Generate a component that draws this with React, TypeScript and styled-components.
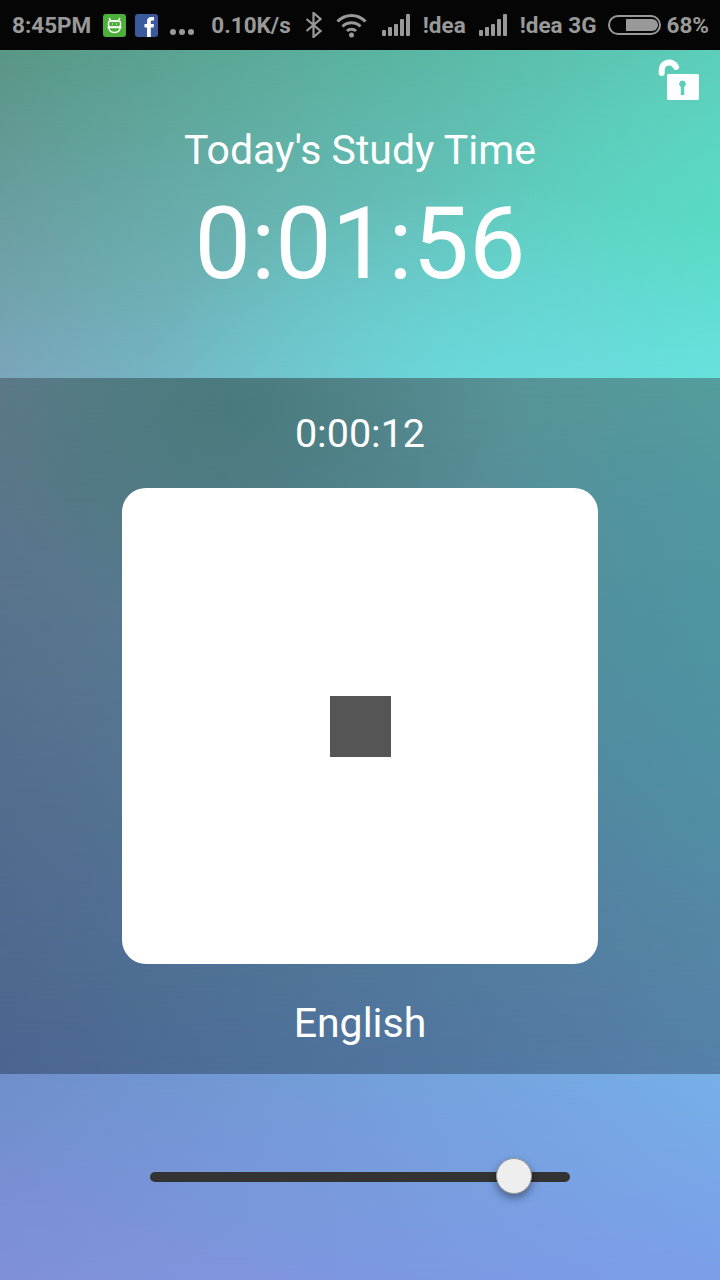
import { FC } from 'react'
import styled, { createGlobalStyle } from 'styled-components'

const GlobalStl = createGlobalStyle`
  html, body {
    margin: 0;
    padding: 0;
    width: 720px;
    height: 1280px;
    overflow: hidden;
    font-family: 'Roboto', 'Liberation Sans', sans-serif;
  }
`

const ScreenStl = styled.div`
  width: 720px;
  height: 1280px;
  display: flex;
  flex-direction: column;
`

const StatusBarStl = styled.div`
  flex: 0 0 50px;
  display: flex;
  align-items: center;
  padding-left: 12px;
  background: #050505;
  color: #999;
  font-size: 22.5px;
  font-weight: 700;
  white-space: nowrap;
`

const StatusItem = styled.span<{ $gap?: number }>`
  display: flex;
  align-items: center;
  margin-left: ${({ $gap }) => $gap ?? 0}px;
`

const AppIconStl = styled.span<{ $bg: string }>`
  width: 23px;
  height: 23px;
  border-radius: 3px;
  background: ${({ $bg }) => $bg};
  display: flex;
  align-items: center;
  justify-content: center;
  overflow: hidden;
`

// each band is a 4 corner blend: the base is the top edge, ::before fades in the bottom edge,
// ::after carries the soft patches of the picture
const Band = styled.section<{ $h: number; $tl: string; $tr: string; $bl: string; $br: string; $glow?: string }>`
  flex: 0 0 ${({ $h }) => $h}px;
  position: relative;
  display: flex;
  flex-direction: column;
  align-items: center;
  color: #fff;
  background: linear-gradient(to right, ${({ $tl, $tr }) => `${$tl}, ${$tr}`});
  &::before {
    content: '';
    position: absolute;
    inset: 0;
    background: linear-gradient(to right, ${({ $bl, $br }) => `${$bl}, ${$br}`});
    mask-image: linear-gradient(to bottom, transparent, #000);
  }
  &::after {
    content: '';
    position: absolute;
    inset: 0;
    background: ${({ $glow }) => $glow ?? 'none'};
  }
  & > * {
    position: relative;
    z-index: 1;
  }
`

const LockBtn = styled.div`
  position: absolute !important;
  top: 9px;
  right: 20px;
  width: 42px;
  height: 42px;
`

const Heading = styled.div`
  margin-top: 76px;
  font-size: 41px;
  line-height: 48px;
`

const TotalTime = styled.div`
  margin-top: 11px;
  font-size: 100.5px;
  line-height: 118px;
`

const SessionTime = styled.div`
  margin-top: 32px;
  font-size: 39.5px;
  line-height: 48px;
`

const StopCard = styled.div`
  margin-top: 30px;
  width: 476px;
  height: 476px;
  border-radius: 24px;
  background: #fff;
  display: flex;
  align-items: center;
  justify-content: center;
`

const StopIcon = styled.div`
  width: 61px;
  height: 61px;
  background: #555;
`

const Subject = styled.div`
  margin-top: 35px;
  font-size: 41px;
  line-height: 48px;
`

const SliderWrap = styled.div`
  margin-top: 98px;
  width: 420px;
  height: 10px;
  border-radius: 5px;
  background: #333;
`

const SliderKnob = styled.div`
  position: absolute;
  top: -14px;
  width: 36px;
  height: 36px;
  margin-left: -18px;
  box-sizing: border-box;
  border-radius: 50%;
  border: 1px solid #999;
  background: #eee;
  box-shadow: 0 4px 8px rgba(0, 0, 0, 0.4);
`

const SignalIcon: FC = () => (
  <svg width="28" height="24" viewBox="0 0 28 24" fill="#999">
    <rect x="0" y="17" width="4" height="6" rx="1" />
    <rect x="6" y="14" width="4" height="9" rx="1" />
    <rect x="12" y="11" width="4" height="12" rx="1" />
    <rect x="18" y="6" width="4" height="17" rx="1" />
    <rect x="24" y="1" width="4" height="22" rx="1" />
  </svg>
)

const StatusBar: FC = () => (
  <StatusBarStl>
    <StatusItem>8:45PM</StatusItem>
    <StatusItem $gap={12}>
      <AppIconStl $bg="#4caf3a">
        <svg width="19" height="19" viewBox="0 0 19 19" fill="none" stroke="#fff" strokeWidth="1.4">
          <path d="M4 2l2 3h7l2-3" />
          <rect x="3.500" y="5" width="12" height="6" rx="2" />
          <path d="M2.500 11.500h14M4 11.500c0 3 2 5 5.500 5s5.500-2 5.500-5" />
          <path d="M7 8h.5M11.500 8h.5" strokeWidth="2" />
        </svg>
      </AppIconStl>
    </StatusItem>
    <StatusItem $gap={9}>
      <AppIconStl $bg="#3b5a9e">
        <svg width="23" height="23" viewBox="0 0 23 23" fill="#fff">
          <path d="M12 23V13.500H9.500V10H12V7.500C12 4.500 13.700 3 16.300 3H19V6.500H17.200C16.200 6.500 15.800 7 15.800 8V10H19L18.500 13.500H15.800V23Z" />
        </svg>
      </AppIconStl>
    </StatusItem>
    <StatusItem $gap={12}>
      <svg width="24" height="8" viewBox="0 0 24 8" fill="#999" style={{ marginTop: 13 }}>
        <circle cx="3" cy="4" r="3" />
        <circle cx="12" cy="4" r="3" />
        <circle cx="21" cy="4" r="3" />
      </svg>
    </StatusItem>
    <StatusItem $gap={17}>0.10K/s</StatusItem>
    <StatusItem $gap={14}>
      <svg width="17" height="26" viewBox="0 0 17 26" fill="none" stroke="#999" strokeWidth="2.200">
        <path d="M1.500 7l14 12-7 6V1l7 6-14 12" />
      </svg>
    </StatusItem>
    <StatusItem $gap={14}>
      <svg width="31" height="26" viewBox="0 0 31 26" fill="none" stroke="#999" strokeWidth="3">
        <path d="M1.500 9.500c8-8 20-8 28 0" />
        <path d="M6.500 14.500c5-5 13-5 18 0" />
        <path d="M11 19c2.500-2.500 6.500-2.500 9 0" />
        <circle cx="15.500" cy="23" r="2.500" fill="#999" stroke="none" />
      </svg>
    </StatusItem>
    <StatusItem $gap={15}><SignalIcon /></StatusItem>
    <StatusItem $gap={13}>!dea</StatusItem>
    <StatusItem $gap={13}><SignalIcon /></StatusItem>
    <StatusItem $gap={13}>!dea 3G</StatusItem>
    <StatusItem $gap={11}>
      <svg width="53" height="20" viewBox="0 0 53 20">
        <rect x="1" y="1" width="51" height="18" rx="9" fill="none" stroke="#999" strokeWidth="2" />
        <path d="M18 4h26a6 6 0 0 1 0 12H18z" fill="#999" />
      </svg>
    </StatusItem>
    <StatusItem $gap={6}>68%</StatusItem>
  </StatusBarStl>
)

const LockIcon: FC = () => (
  <svg width="42" height="42" viewBox="0 0 42 42">
    <path d="M3.700 14V11a7.500 7.500 0 0 1 14.400-3" fill="none" stroke="#fff" strokeWidth="6" strokeLinecap="round" />
    <path
      fillRule="evenodd"
      fill="#fff"
      d="M10.500 15H39.500a1.500 1.500 0 0 1 1.500 1.500V39.500a1.500 1.500 0 0 1-1.500 1.500H10.500a1.500 1.500 0 0 1-1.500-1.500V16.500A1.500 1.500 0 0 1 10.500 15ZM24.500 21.500a3.500 3.500 0 0 0-1.700 6.500V36h3.400V28a3.500 3.500 0 0 0-1.700-6.500Z"
    />
  </svg>
)

const App: FC = () => {
  const sliderValue = 364 / 420
  return (
    <ScreenStl>
      <GlobalStl />
      <StatusBar />
      <Band
        $h={328}
        $tl="#5a9686"
        $tr="#5ccfba"
        $bl="#7aa6ba"
        $br="#66e2dc"
        $glow="radial-gradient(ellipse 360px 190px at 500px 328px, rgba(104, 226, 226, 0.55), transparent), radial-gradient(ellipse 300px 150px at 720px 170px, rgba(80, 220, 190, 0.5), transparent)"
      >
        <LockBtn><LockIcon /></LockBtn>
        <Heading>Today's Study Time</Heading>
        <TotalTime>0:01:56</TotalTime>
      </Band>
      <Band
        $h={696}
        $tl="#5f7a8a"
        $tr="#559e9e"
        $bl="#4a6590"
        $br="#5580a8"
        $glow="radial-gradient(ellipse 280px 220px at 230px 30px, rgba(60, 115, 110, 0.6), transparent), radial-gradient(ellipse 260px 300px at 720px 260px, rgba(70, 150, 160, 0.5), transparent)"
      >
        <SessionTime>0:00:12</SessionTime>
        <StopCard><StopIcon /></StopCard>
        <Subject>English</Subject>
      </Band>
      <Band $h={206} $tl="#6f8fcb" $tr="#78b0e8" $bl="#8090d8" $br="#7a9ee8">
        <SliderWrap>
          <SliderKnob style={{ left: `${sliderValue * 100}%` }} />
        </SliderWrap>
      </Band>
    </ScreenStl>
  )
}

export default App
